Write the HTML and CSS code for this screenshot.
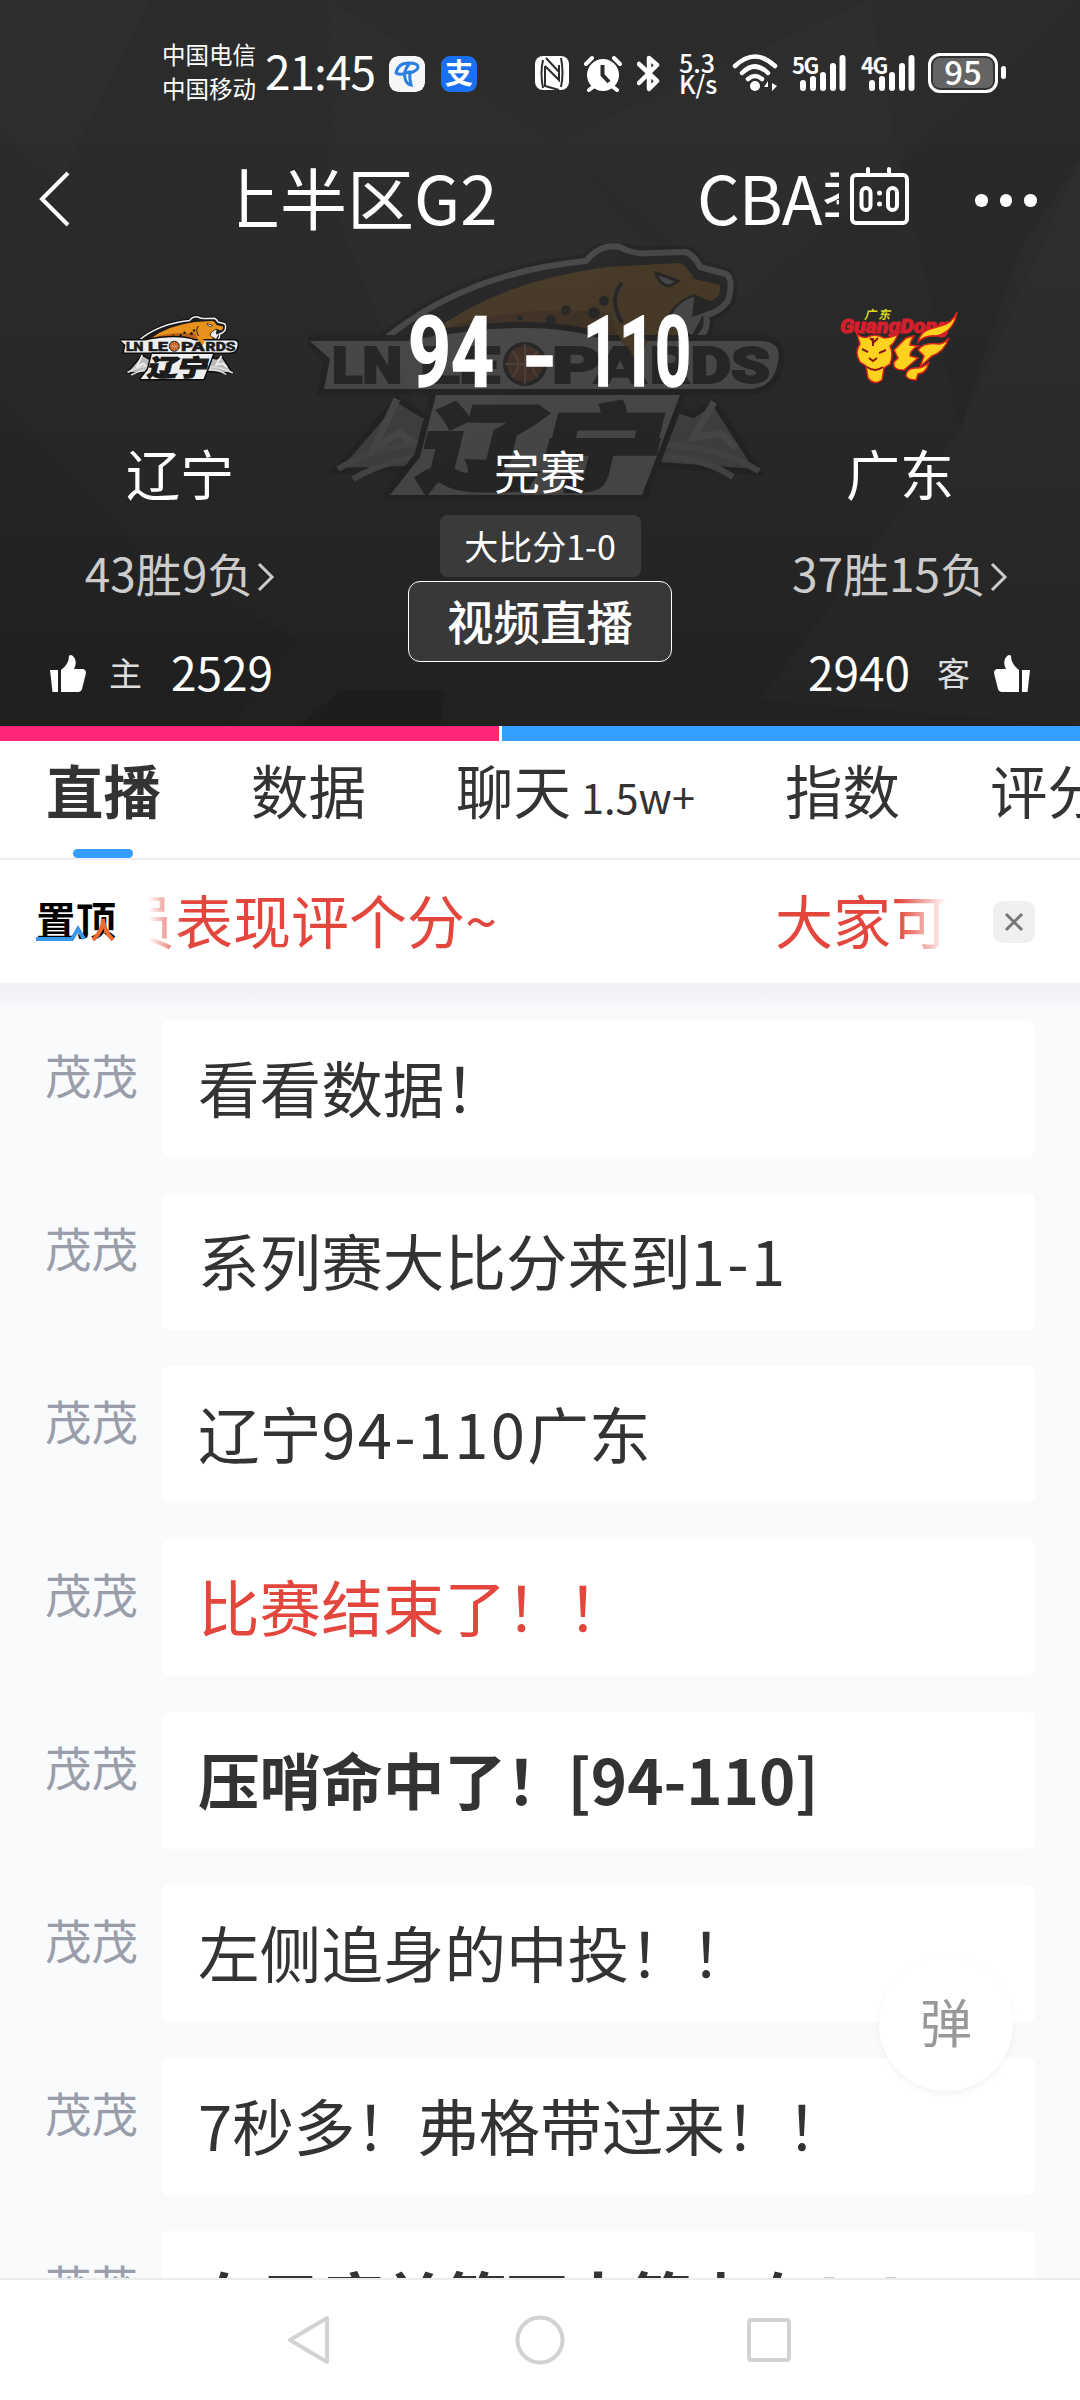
FILE: index.html
```html
<!DOCTYPE html>
<html lang="zh-CN">
<head>
<meta charset="utf-8">
<title>上半区G2 辽宁 - 广东</title>
<link rel="stylesheet" href="styles.css">
</head>
<body>

<svg class="defs" width="0" height="0">
  <symbol id="leopards" viewBox="0 0 480 264">
    <path d="M89 156L27 228L130 225L150 165L115 172ZM406 159L451 229L350 222L350 160L385 172Z" fill="#bbb" stroke="#0c0c0c" stroke-width="6"/>
    <path d="M89 156L66 205L92 190L112 205L150 165M406 159L385 195L412 190L428 205" fill="none" stroke="#eee" stroke-width="7"/>
    <path d="M30 226Q80 195 150 200M45 236Q90 210 150 212M451 228Q400 198 335 202M425 234Q390 210 335 215" fill="none" stroke="#ddd" stroke-width="6"/>
    <path d="M72 100Q155 30 278 18Q292 0 312 4Q326 12 345 10L378 9Q388 14 392 24L418 31Q426 36 420 58Q410 70 398 72Q402 90 385 98L340 102Z" fill="#0c0c0c" stroke="#0c0c0c" stroke-width="14" stroke-linejoin="round"/>
    <path d="M72 100Q155 30 278 18Q292 0 312 4Q326 12 345 10L378 9Q388 14 392 24L418 31Q426 36 420 58Q410 70 398 72Q402 90 385 98L340 102Z" fill="#1b1b1b" stroke="#eee" stroke-width="6" stroke-linejoin="round"/>
    <path d="M120 92Q190 38 300 24L372 20Q382 26 386 36L412 42Q414 54 402 58L386 51Q366 58 358 76L374 90L340 100L322 128L306 96Q220 70 120 92Z" fill="#e8921d"/>
    <path d="M120 92Q190 60 302 70L318 112L306 96Q220 70 120 92Z" fill="#b9601a"/>
    <path d="M314 40Q300 55 314 80" fill="none" stroke="#1b1b1b" stroke-width="4"/>
    <path d="M348 30l22 8l-8 5q-10 0-14-13z" fill="#eee" stroke="#1b1b1b" stroke-width="3"/>
    <path d="M386 54Q366 60 362 78L384 92L396 70L384 74Z" fill="#eee"/>
    <g fill="#1b1b1b"><circle cx="258" cy="67" r="5"/><circle cx="243" cy="77" r="5"/><circle cx="286" cy="70" r="6"/><circle cx="296" cy="58" r="5"/><circle cx="212" cy="75" r="3"/></g>
    <path d="M2 98H100Q230 72 300 98H455Q474 100 470 118Q466 146 440 146H16L22 116Z" fill="#eee" stroke="#0c0c0c" stroke-width="12" paint-order="stroke"/>
    <path d="M306 80L340 98L326 128Z" fill="#e8921d"/>
    <g class="logo-word"><text x="24" y="140" textLength="70" lengthAdjust="spacingAndGlyphs">LN</text><text x="112" y="140" textLength="80" lengthAdjust="spacingAndGlyphs">LE</text><text x="244" y="140" textLength="94" lengthAdjust="spacingAndGlyphs">PA</text><text x="342" y="140" textLength="120" lengthAdjust="spacingAndGlyphs">RDS</text></g>
    <circle cx="217" cy="121" r="20" fill="#c2581c" stroke="#1b1b1b" stroke-width="4"/>
    <path d="M217 101v40M197 121h40M204 108q13 13 0 26M230 108q-13 13 0 26" fill="none" stroke="#f0c090" stroke-width="2"/>
    <path d="M128 152H372L352 205L334 252H82L112 214Z" fill="#eee" stroke="#0c0c0c" stroke-width="12" stroke-linejoin="round" paint-order="stroke"/>
    <text class="logo-cn" x="232" y="239" textLength="240" lengthAdjust="spacingAndGlyphs" transform="skewX(-14) translate(54 0)">辽宁</text>
  </symbol>
  <symbol id="signal" viewBox="0 0 48 38">
    <g fill="#fff"><rect x="0" y="26" width="6" height="11" rx="3"/><rect x="10" y="22" width="6" height="15" rx="3"/><rect x="20" y="18" width="6" height="19" rx="3"/><rect x="30" y="9" width="6" height="28" rx="3"/><rect x="39.500" y="1" width="6" height="36" rx="3"/></g>
  </symbol>
  <symbol id="thumb" viewBox="0 0 36 37">
    <path d="M0 15h8v22H2.500zM11 15Q19 9 19 1Q20-1 23 1Q28 6 24 14H33Q37 15 35.500 20L32 34Q31 37 28 37H11Z" fill="#fff"/>
  </symbol>
</svg>

<div class="header">
  <svg class="facets" viewBox="0 0 1080 726" preserveAspectRatio="none">
    <path d="M0 0H150L60 180L0 130Z" fill="#fff" opacity=".01"/>
    <path d="M330 0L555 140L640 240L440 470L330 200Z" fill="#fff" opacity=".01"/>
    <path d="M555 140L870 0L900 165L740 300Z" fill="#fff" opacity=".012"/>
    <path d="M1080 160L1020 250L960 430L760 700L1080 726Z" fill="#fff" opacity=".015"/>
    <path d="M0 400L150 560L300 640L230 726H0Z" fill="#000" opacity=".03"/>
    <path d="M340 690L445 690L440 726H300Z" fill="#000" opacity=".12"/>
    <path d="M900 165L1080 0V160L960 430Z" fill="#000" opacity=".04"/>
  </svg>
  <svg class="watermark"><use href="#leopards"/></svg>

  <div class="status">
    <div class="carrier">中国电信<br>中国移动</div>
    <div class="clock">21:45</div>
    <svg class="app" viewBox="0 0 36 36"><rect width="36" height="36" rx="9" fill="#f4f6f8"/><path d="M7 17Q9 7 20 7Q29 7 29 11Q29 15 20 17M7 17Q12 20 20 16M20 8Q14 16 16 22Q17 28 22 29Q20 22 21 16" fill="none" stroke="#2b7fe0" stroke-width="3" stroke-linecap="round"/></svg>
    <div class="app pay">支</div>
    <svg class="nfc" width="34" height="36" viewBox="0 0 34 36"><rect y="1" width="34" height="34" rx="8" fill="#fff"/><path d="M8 5Q5 18 8 33M11 3L24 17V10M10 11L24 25V18M10 11V31L24 35M26 3Q29 18 26 32" fill="none" stroke="#2b2b2b" stroke-width="2"/></svg>
    <svg class="alarm" width="38" height="37" viewBox="0 0 38 37"><circle cx="19" cy="20" r="16" fill="#fff"/><path d="M2 9L8 3M30 3L36 9M9 32L5 35M29 32L33 35" stroke="#fff" stroke-width="4" stroke-linecap="round"/><path d="M18.500 10V20L25 27" fill="none" stroke="#2b2b2b" stroke-width="4"/></svg>
    <svg class="bt" width="23" height="37" viewBox="0 0 23 37"><path d="M2 9L20 26L12 34V3L20 10L2 28" fill="none" stroke="#fff" stroke-width="4.500" stroke-linejoin="round" stroke-linecap="round"/></svg>
    <div class="speed">5.3<br>K/s</div>
    <svg class="wifi" width="48" height="38" viewBox="0 0 48 38"><path d="M3 12Q23-7 43 12M10 19Q23 6 36 19M16 25Q23 19 30 25" fill="none" stroke="#fff" stroke-width="4.500" stroke-linecap="round"/><circle cx="23" cy="32" r="5" fill="#fff"/><path d="M32 33h4v-6zM40 37v-8l5 3z" fill="#fff"/></svg>
    <div class="sim"><span>5G</span><svg><use href="#signal"/></svg></div>
    <div class="sim sim2"><span>4G</span><svg><use href="#signal"/></svg></div>
    <div class="battery">95</div><i class="nub"></i>
  </div>

  <div class="navbar">
    <svg class="back" width="32" height="56" viewBox="0 0 32 56"><path d="M30 2L4 28L30 54" fill="none" stroke="#fff" stroke-width="4"/></svg>
    <div class="title left"><span>上半区G2</span></div>
    <div class="title right">CBA季后赛</div>
    <svg class="board" width="60" height="58" viewBox="0 0 60 58"><rect x="2" y="8" width="55" height="48" rx="4" fill="none" stroke="#fff" stroke-width="4"/><path d="M18 2V8M39 2V8" stroke="#fff" stroke-width="4" stroke-linecap="round"/><rect x="11.500" y="21" width="9" height="22" rx="4.500" fill="none" stroke="#fff" stroke-width="4"/><rect x="38" y="21" width="9" height="22" rx="4.500" fill="none" stroke="#fff" stroke-width="4"/><circle cx="29.500" cy="26" r="2.500" fill="#fff"/><circle cx="29.500" cy="37" r="2.500" fill="#fff"/></svg>
    <div class="dots"><i></i><i></i><i></i></div>
  </div>

  <div class="match">
    <div class="team">
      <svg class="logo"><use href="#leopards"/></svg>
      <div class="name">辽宁</div>
      <div class="record">43胜9负<svg width="18" height="30" viewBox="0 0 18 30"><path d="M2 2L15 15L2 28" fill="none" stroke="#ccc" stroke-width="3"/></svg></div>
    </div>
    <div class="middle">
      <svg class="score" width="300" height="80" viewBox="0 0 300 80"><text x="18" y="74" textLength="86" lengthAdjust="spacingAndGlyphs">94</text><rect x="137" y="44" width="25" height="10" fill="#fff"/><text x="193" y="74" textLength="108" lengthAdjust="spacingAndGlyphs">110</text></svg>
      <div class="state">完赛</div>
      <div class="series">大比分1-0</div>
      <div class="video">视频直播</div>
    </div>
    <div class="team">
      <svg class="logo" viewBox="0 0 120 84">
        <text class="gd-cn" x="24" y="12" textLength="26">广东</text>
        <text class="gd" x="0" y="26" textLength="109" lengthAdjust="spacingAndGlyphs">GuangDong</text>
        <g transform="translate(0 -5)">
          <path d="M100 24Q112 22 117 10Q114 30 96 34Q85 33 78 40Q80 30 90 27Z" fill="#ffd21e" stroke="#d8201c" stroke-width="1.500"/>
          <path d="M17 32Q24 38 30 34Q38 32 44 36Q52 36 58 32Q54 42 50 44Q54 52 50 62L44 66L42 78Q34 84 28 76L26 64L20 60Q14 50 20 42Z" fill="#ffd21e" stroke="#d8201c" stroke-width="1.500"/>
          <path d="M54 48L66 36L74 34Q70 40 70 43L78 44Q70 48 70 54L78 56L64 68Q52 68 54 60L58 56Z" fill="#ffd21e" stroke="#d8201c" stroke-width="1.500"/>
          <path d="M78 48Q84 40 98 42Q104 42 109 36Q104 50 92 54L80 65L84 54ZM66 74Q66 66 76 66Q84 66 89 60Q86 72 78 72L76 78Q68 78 66 74Z" fill="#ffd21e" stroke="#d8201c" stroke-width="1.500"/>
          <path d="M22 47l6 3M46 48l-7 3M29 56l4 3l4-3M27 65q8 6 16 0M30 36l4 4l4-4M33 36v8" fill="none" stroke="#8a1a10" stroke-width="2"/>
        </g>
      </svg>
      <div class="name">广东</div>
      <div class="record">37胜15负<svg width="18" height="30" viewBox="0 0 18 30"><path d="M2 2L15 15L2 28" fill="none" stroke="#ccc" stroke-width="3"/></svg></div>
    </div>
  </div>

  <div class="votes">
    <div class="vote"><svg><use href="#thumb"/></svg><small>主</small><b>2529</b></div>
    <div class="vote away"><svg><use href="#thumb"/></svg><small>客</small><b>2940</b></div>
  </div>
</div>

<div class="ratio"><div class="home"></div><div class="guest"></div></div>

<div class="tabs">
  <div class="tab on">直播</div>
  <div class="tab">数据</div>
  <div class="tab">聊天<small>1.5w+</small></div>
  <div class="tab">指数</div>
  <div class="tab">评分</div>
</div>

<div class="notice">
  <div class="pin">置顶<svg viewBox="0 0 80 40"><path d="M0 38H36L42 28L48 38" fill="none" stroke="#3a97ee" stroke-width="4"/><path d="M57 39Q67 30 67 18Q68 30 77 39" fill="none" stroke="#f06a32" stroke-width="4"/></svg></div>
  <div class="marquee"><span class="msg1">员表现评个分~</span><span>大家可以</span></div>
  <div class="close"><svg width="20" height="20" viewBox="0 0 20 20"><path d="M2 2L18 18M18 2L2 18" stroke="#777" stroke-width="3"/></svg></div>
</div>

<div class="live">
  <div class="row"><div class="who">茂茂</div><div class="say">看看数据！</div></div>
  <div class="row"><div class="who">茂茂</div><div class="say">系列赛大比分来到<span class="num">1-1</span></div></div>
  <div class="row"><div class="who">茂茂</div><div class="say">辽宁<span class="num">94-110</span>广东</div></div>
  <div class="row"><div class="who">茂茂</div><div class="say red">比赛结束了！！</div></div>
  <div class="row"><div class="who">茂茂</div><div class="say bold">压哨命中了！[94-110]</div></div>
  <div class="row"><div class="who">茂茂</div><div class="say">左侧追身的中投！！</div></div>
  <div class="row"><div class="who">茂茂</div><div class="say">7秒多！弗格带过来！！</div></div>
  <div class="row"><div class="who">茂茂</div><div class="say bold">在只库关第下大第少有！！</div></div>
  <div class="danmu">弹</div>
</div>

<div class="sysnav">
  <svg width="504" height="52" viewBox="0 0 504 52"><g fill="none" stroke="#d2d2d2" stroke-width="4" stroke-linejoin="round"><path d="M2 26L39 4V48Z"/><circle cx="252" cy="26" r="22.500"/><rect x="461" y="6" width="40" height="40" rx="2"/></g></svg>
</div>

</body>
</html>
```
FILE: styles.css
```css
body {
    margin: 0;
    width: 1080px;
    height: 2400px;
    overflow: hidden;
    background: #f9fafc;
    color: #333;
    font-family: "Noto Sans CJK SC", sans-serif;
    display: flex;
    flex-direction: column;
}
.defs {
    position: absolute;
}
.logo-word {
    font: 900 50px "Roboto", sans-serif;
    fill: #1b1b1b;
}
.logo-word text {
    stroke: #1b1b1b;
    stroke-width: 2px;
}
.logo-cn {
    font: 900 92px "Noto Sans CJK SC", sans-serif;
    text-anchor: middle;
    fill: #1b1b1b;
    stroke: #1b1b1b;
    stroke-width: 5px;
}
.gd {
    font: italic 900 20px "Roboto", sans-serif;
    fill: #d3202c;
    stroke: #d3202c;
}
.gd-cn {
    font: italic bold 12px "Noto Sans CJK SC", sans-serif;
    fill: #d8d820;
}

/* header */
.header {
    position: relative;
    height: 726px;
    flex: none;
    background: linear-gradient(#2c2c2c, #2a2a2a 40%, #212121);
    color: #fff;
}
.facets {
    position: absolute;
    left: 0;
    top: 0;
    width: 1080px;
    height: 726px;
}
.watermark {
    position: absolute;
    left: 308px;
    top: 243px;
    width: 480px;
    height: 264px;
    opacity: .15;
}
.status, .navbar, .match, .votes {
    position: relative;
    display: flex;
}
.status {
    height: 147px;
    box-sizing: border-box;
    padding: 37px 0 0 162px;
    align-items: flex-start;
}
.carrier {
    width: 103px;
    font-size: 23.5px;
    line-height: 34px;
    white-space: nowrap;
}
.clock {
    width: 124px;
    font-size: 46px;
    line-height: 68px;
    margin-top: -1px;
    letter-spacing: -1px;
}
.app {
    width: 36px;
    height: 36px;
    margin-top: 19px;
    border-radius: 9px;
}
.pay {
    margin-left: 16px;
    background: #1a70f0;
    font-size: 28px;
    font-weight: bold;
    line-height: 33px;
    text-align: center;
}
.nfc {
    margin: 18px 15px 0 58px;
}
.alarm {
    margin: 18px 15px 0 0;
}
.bt {
    margin: 18px 19px 0 0;
}
.speed {
    width: 53px;
    font-size: 25px;
    font-weight: 500;
    line-height: 21px;
    margin-top: 15px;
}
.wifi {
    margin: 17px 12px 0 0;
}
.sim {
    position: relative;
    width: 69px;
    height: 38px;
    margin-top: 17px;
}
.sim span {
    position: absolute;
    left: 0;
    top: 0;
    font-size: 22px;
    font-weight: bold;
    line-height: 20px;
    letter-spacing: -1.500px;
}
.sim svg {
    display: block;
    width: 48px;
    height: 38px;
    margin-left: 8px;
}
.sim2 {
    width: 67px;
}
.battery {
    box-sizing: border-box;
    width: 70px;
    height: 40px;
    margin-top: 16px;
    border: 3px solid #fff;
    border-radius: 12px;
    background: #646464;
    box-shadow: inset 0 0 0 2px #333;
    font-size: 33px;
    font-weight: 500;
    line-height: 31px;
    text-align: center;
}
.nub {
    width: 5px;
    height: 13px;
    margin: 29px 0 0 3px;
    border-radius: 3px;
    background: #fff;
}

.navbar {
    height: 123px;
    align-items: flex-start;
}
.back {
    margin: 24px 0 0 38px;
}
.title {
    font-size: 67px;
    line-height: 98px;
    white-space: nowrap;
    overflow: hidden;
}
.title.left {
    margin-left: 169px;
    width: 261px;
}
.title.left span {
    margin-left: -26px;
}
.title.right {
    margin-left: 197px;
    width: 142px;
    letter-spacing: -1px;
}
.board {
    margin: 20px 0 0 11px;
}
.dots {
    display: flex;
    gap: 12px;
    margin: 47px 0 0 65px;
}
.dots i {
    width: 12.500px;
    height: 12.500px;
    border-radius: 50%;
    background: #fff;
}

.match {
    height: 392px;
}
.team, .middle {
    width: 360px;
    display: flex;
    flex-direction: column;
    align-items: center;
}
.logo {
    width: 120px;
    height: 84px;
    margin-top: 37px;
}
.name {
    margin-top: 42px;
    font-size: 54px;
    line-height: 80px;
}
.record {
    margin-top: 29px;
    font-size: 46px;
    line-height: 60px;
    color: #ccc;
}
.record svg {
    margin-left: 4px;
}
.score {
    margin-top: 42px;
    overflow: visible;
    font: bold 98px "Roboto", sans-serif;
    fill: #fff;
    stroke: #fff;
    stroke-width: 1.500px;
}
.state {
    margin-top: 44px;
    font-size: 46px;
    line-height: 66px;
}
.series {
    margin-top: 13px;
    width: 201px;
    height: 62px;
    border-radius: 7px;
    background: #3a3a3a;
    font-size: 34px;
    line-height: 61px;
    text-align: center;
}
.video {
    box-sizing: border-box;
    margin-top: 4px;
    width: 264px;
    height: 81px;
    border: 1.500px solid #fff;
    border-radius: 12px;
    background: #383838;
    font-size: 46.500px;
    font-weight: 500;
    line-height: 75px;
    text-align: center;
}

.votes {
    height: 64px;
    padding: 0 50px;
    justify-content: space-between;
    line-height: 20px;
}
.vote {
    display: flex;
    align-items: center;
    height: 22px;
}
.vote svg {
    width: 36px;
    height: 37px;
}
.vote small {
    margin-left: 23px;
    font-size: 33px;
    color: #ddd;
    position: relative;
    top: -1px;
}
.vote b {
    margin-left: 29px;
    font-size: 46px;
    font-weight: normal;
    position: relative;
    top: -2px;
}
.away {
    flex-direction: row-reverse;
}
.away svg {
    transform: scaleX(-1);
}
.away small {
    margin: 0 24px 0 0;
}
.away b {
    margin: 0 27px 0 0;
}

.ratio {
    display: flex;
    flex: none;
    gap: 3px;
    height: 15px;
    background: #fff;
}
.home {
    width: 499px;
    background: #ff2878;
}
.guest {
    flex: 1;
    background: #339eff;
}

/* tabs */
.tabs {
    position: relative;
    z-index: 1;
    display: flex;
    flex: none;
    gap: 90px;
    height: 117px;
    padding-left: 46px;
    background: #fff;
    border-bottom: 2px solid #ededed;
}
.tab {
    position: relative;
    flex: none;
    font-size: 57.500px;
    line-height: 96px;
}
.tab small {
    margin-left: 10px;
    font-size: 41.500px;
}
.on {
    font-weight: bold;
}
.on:after {
    content: "";
    position: absolute;
    left: 27px;
    bottom: 0;
    width: 60px;
    height: 9px;
    border-radius: 5px;
    background: #339eff;
}

.notice {
    position: relative;
    display: flex;
    flex: none;
    align-items: center;
    height: 123px;
    background: #fff;
    box-shadow: 0 4px 30px #dfe3e8;
}
.pin {
    position: relative;
    width: 80px;
    margin: -5px 0 0 36px;
    font-size: 40px;
    font-weight: bold;
    line-height: 40px;
    color: #000;
}
.pin svg {
    position: absolute;
    left: 0;
    top: 2px;
    width: 80px;
    height: 40px;
}
.marquee {
    display: flex;
    width: 798px;
    margin: -6px 0 0 32px;
    overflow: hidden;
    white-space: nowrap;
    font-size: 58px;
    line-height: 90px;
    color: #e3463c;
    -webkit-mask-image: linear-gradient(90deg, transparent, #000 35px, #000 750px, transparent);
    mask-image: linear-gradient(90deg, transparent, #000 35px, #000 750px, transparent);
}
.msg1 {
    flex: none;
    width: 658px;
    margin-left: -31px;
}
.close {
    display: flex;
    align-items: center;
    justify-content: center;
    width: 42px;
    height: 42px;
    margin-left: 47px;
    border-radius: 10px;
    background: #efefef;
}

/* live text */
.live {
    position: relative;
    flex: 1;
    padding-top: 37px;
    overflow: hidden;
    background: linear-gradient(#eef0f3, #f9fafc 28px);
}
.row {
    display: flex;
    height: 137px;
    margin-bottom: 36px;
}
.who {
    width: 117px;
    padding-left: 45px;
    font-size: 46.500px;
    line-height: 107px;
    color: #9a9eaa;
}
.say {
    width: 837px;
    padding-left: 36px;
    border-radius: 7px;
    background: #fff;
    font-size: 61.600px;
    line-height: 133px;
    white-space: nowrap;
}
.num {
    letter-spacing: 2.300px;
}
.red {
    color: #e3463c;
}
.bold {
    font-weight: bold;
}
.danmu {
    position: absolute;
    left: 879px;
    top: 974px;
    width: 134px;
    height: 134px;
    border-radius: 50%;
    background: #fff;
    box-shadow: 0 3px 6px rgba(0, 0, 0, .05);
    font-size: 52px;
    line-height: 128px;
    text-align: center;
    color: #999;
}

.sysnav {
    flex: none;
    height: 120px;
    border-top: 2px solid #ececec;
    background: #fff;
    text-align: center;
}
.sysnav svg {
    margin-top: 34px;
}
```
